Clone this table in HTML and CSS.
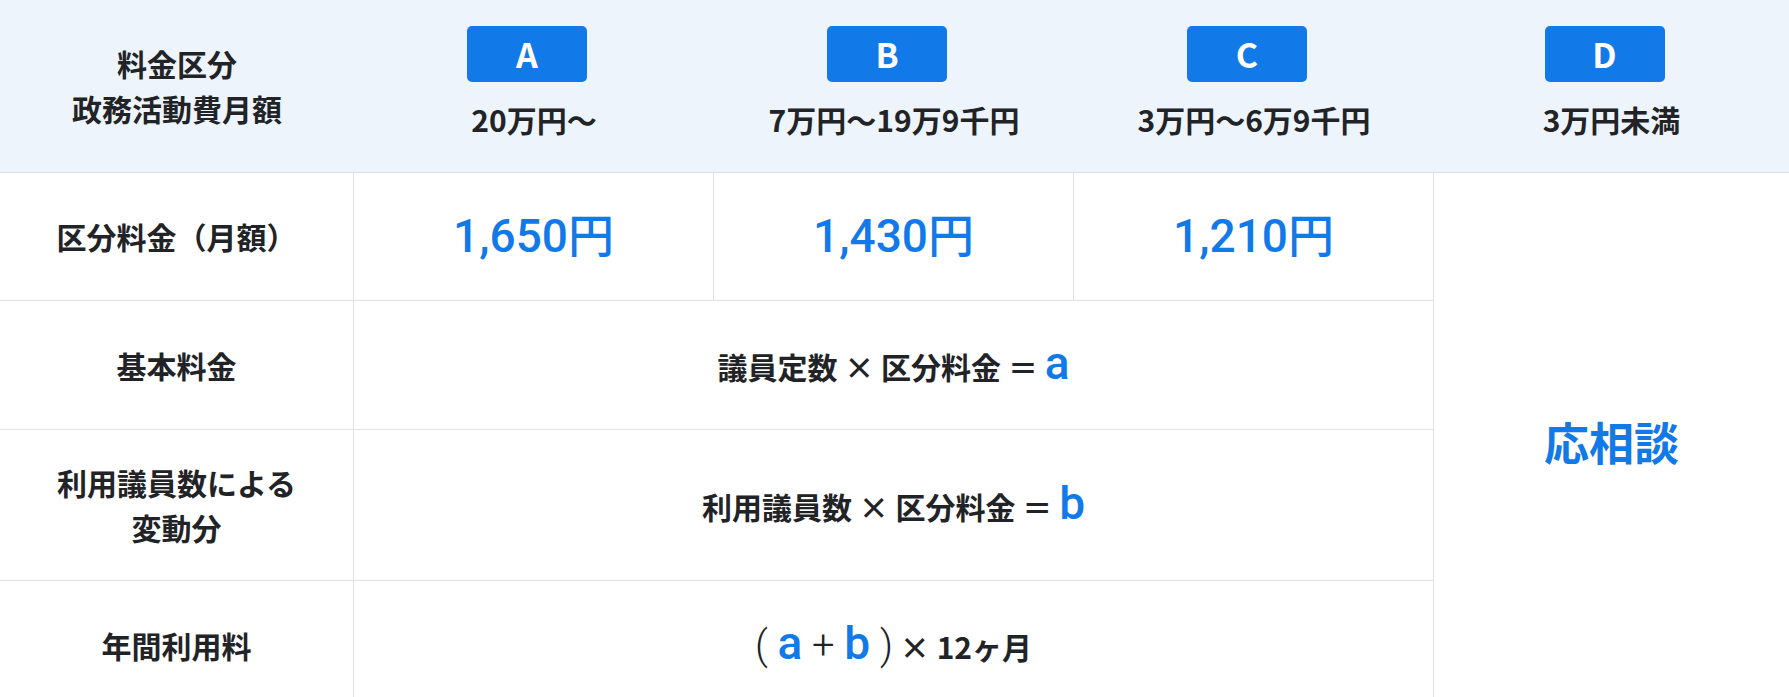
FILE: index.html
```html
<!DOCTYPE html>
<html lang="ja">
<head>
<meta charset="utf-8">
<title>料金表</title>
<link rel="stylesheet" href="styles.css">
</head>
<body>
<div class="price-table">
  <div class="head">
    <div class="head-cell head-label">料金区分<br>政務活動費月額</div>
    <div class="head-cell"><span class="badge">A</span><span class="range">20万円～</span></div>
    <div class="head-cell"><span class="badge">B</span><span class="range">7万円～19万9千円</span></div>
    <div class="head-cell"><span class="badge">C</span><span class="range">3万円～6万9千円</span></div>
    <div class="head-cell"><span class="badge">D</span><span class="range">3万円未満</span></div>
  </div>
  <div class="body">
    <div class="cell label">区分料金（月額）</div>
    <div class="cell price">1,650円</div>
    <div class="cell price">1,430円</div>
    <div class="cell price">1,210円</div>
    <div class="cell consult">応相談</div>
    <div class="cell label">基本料金</div>
    <div class="cell formula"><span class="expr">議員定数 × 区分料金 ＝ <span class="var">a</span></span></div>
    <div class="cell label">利用議員数による<br>変動分</div>
    <div class="cell formula"><span class="expr">利用議員数 × 区分料金 ＝ <span class="var">b</span></span></div>
    <div class="cell label">年間利用料</div>
    <div class="cell formula"><span class="expr"><span class="sym">( <span class="var">a</span> + <span class="var">b</span> )</span> × 12ヶ月</span></div>
  </div>
</div>
</body>
</html>
```

FILE: styles.css
```css
html, body {
  margin: 0;
  padding: 0;
  background: #ffffff;
}

body {
  font-family: "Noto Sans CJK JP", "Noto Sans", sans-serif;
  font-weight: 700;
  font-size: 30px;
  line-height: 45px;
  color: #222326;
}

.price-table {
  width: 1789px;
}

.head,
.body {
  display: grid;
  grid-template-columns: 354px 360px 360px 360px 1fr;
}

.head {
  height: 173px;
  box-sizing: border-box;
  background: #edf4fb;
  border-bottom: 1px solid #dde2e8;
}

.head-cell {
  display: flex;
  flex-direction: column;
  align-items: center;
  padding-top: 26px;
  text-align: center;
}

.head-label {
  padding-top: 0;
  justify-content: center;
}

.badge {
  display: block;
  width: 120px;
  height: 56px;
  margin-right: 14px;
  border-radius: 5px;
  background: #1279e8;
  color: #ffffff;
  font-size: 34px;
  line-height: 56px;
  text-align: center;
}

.range {
  display: block;
  margin-top: 15px;
}

.body {
  grid-template-rows: 128px 129px 151px 129px;
}

.cell {
  display: flex;
  align-items: center;
  justify-content: center;
  text-align: center;
  box-sizing: border-box;
  border-right: 1px solid #dfe2e6;
  border-bottom: 1px solid #dfe2e6;
}

.price {
  font-family: Roboto, "Noto Sans CJK JP", sans-serif;
  font-weight: 500;
  font-size: 46px;
  color: #1279e8;
}

.consult {
  grid-column: 5;
  grid-row: 1 / 5;
  border-right: none;
  font-size: 45px;
  color: #1279e8;
}

.formula {
  grid-column: 2 / 5;
}

.var {
  font-family: Roboto, sans-serif;
  font-weight: 500;
  font-size: 46px;
  color: #1279e8;
}

.sym {
  font-family: Roboto, sans-serif;
  font-weight: 300;
  font-size: 40px;
  color: #222326;
}
```
